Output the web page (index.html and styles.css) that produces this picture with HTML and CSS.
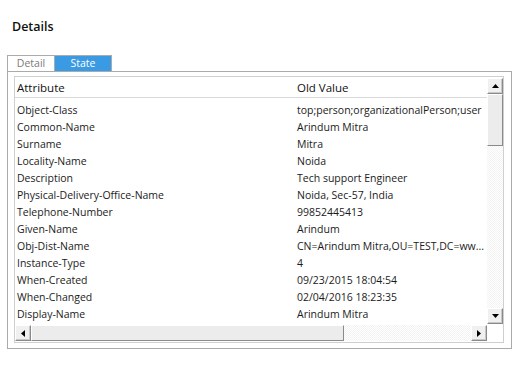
FILE: index.html
```html
<!DOCTYPE html>
<html>
<head>
<meta charset="utf-8">
<link rel="stylesheet" href="styles.css">
</head>
<body>
<h1 class="title">Details</h1>
<div class="panel">
  <div class="tabs">
    <div class="tab tab-off">Detail</div>
    <div class="tab tab-on">State</div>
  </div>
  <div class="box">
    <div class="list">
      <div class="content">
        <div class="head">
          <div class="c1">Attribute</div>
          <div class="c2">Old Value</div>
        </div>
        <div class="rows">
          <div class="row"><div class="c1">Object-Class</div><div class="c2">top;person;organizationalPerson;user</div></div>
          <div class="row"><div class="c1">Common-Name</div><div class="c2">Arindum Mitra</div></div>
          <div class="row"><div class="c1">Surname</div><div class="c2">Mitra</div></div>
          <div class="row"><div class="c1">Locality-Name</div><div class="c2">Noida</div></div>
          <div class="row"><div class="c1">Description</div><div class="c2">Tech support Engineer</div></div>
          <div class="row"><div class="c1">Physical-Delivery-Office-Name</div><div class="c2">Noida, Sec-57, India</div></div>
          <div class="row"><div class="c1">Telephone-Number</div><div class="c2">99852445413</div></div>
          <div class="row"><div class="c1">Given-Name</div><div class="c2">Arindum</div></div>
          <div class="row"><div class="c1">Obj-Dist-Name</div><div class="c2">CN=Arindum Mitra,OU=TEST,DC=ww...</div></div>
          <div class="row"><div class="c1">Instance-Type</div><div class="c2">4</div></div>
          <div class="row"><div class="c1">When-Created</div><div class="c2">09/23/2015 18:04:54</div></div>
          <div class="row"><div class="c1">When-Changed</div><div class="c2">02/04/2016 18:23:35</div></div>
          <div class="row"><div class="c1">Display-Name</div><div class="c2">Arindum Mitra</div></div>
        </div>
      </div>
      <div class="vbar">
        <div class="btn"><svg width="7" height="4" viewBox="0 0 7 4"><path d="M3.5 0L7 4H0Z" fill="#000"/></svg></div>
        <div class="track vtrack"><div class="vthumb"></div></div>
        <div class="btn"><svg width="7" height="4" viewBox="0 0 7 4"><path d="M0 0H7L3.5 4Z" fill="#000"/></svg></div>
      </div>
      <div class="hbar">
        <div class="btn"><svg width="4" height="7" viewBox="0 0 4 7"><path d="M4 0V7L0 3.5Z" fill="#000"/></svg></div>
        <div class="track htrack"><div class="hthumb"></div></div>
        <div class="btn"><svg width="4" height="7" viewBox="0 0 4 7"><path d="M0 0L4 3.5L0 7Z" fill="#000"/></svg></div>
      </div>
      <div class="corner"></div>
    </div>
  </div>
</div>
</body>
</html>
```

FILE: styles.css
```css
html, body {
  margin: 0;
  padding: 0;
  background: #fff;
}
body {
  font-family: "Open Sans", "Noto Sans", sans-serif;
  color: #1b1b1b;
}
.title {
  margin: 0;
  padding: 18px 0 0 12px;
  height: 21px;
  font-size: 12.5px;
  font-weight: 600;
  line-height: 18px;
  color: #111;
}
.panel {
  margin: 16px 0 0 7px;
  width: 505px;
}
.tabs {
  display: flex;
  height: 16px;
}
.tab {
  box-sizing: border-box;
  height: 16px;
  font-size: 10.5px;
  line-height: 15px;
  text-align: center;
}
.tab-off {
  width: 48px;
  border: 1px solid #aaa;
  border-bottom: none;
  color: #7a7a7a;
  background: #fff;
}
.tab-on {
  width: 57px;
  background: #3a9ae3;
  color: #fff;
  border-top: 1px solid #aaa;
  border-right: 1px solid #aaa;
}
.box {
  box-sizing: border-box;
  width: 505px;
  height: 278px;
  border: 1px solid #aaa;
  padding: 4px 0 0 6px;
}
.list {
  box-sizing: border-box;
  width: 490px;
  height: 267px;
  border: 1px solid #cfcfcf;
  display: grid;
  grid-template-columns: 472px 16px;
  grid-template-rows: 247px 18px;
  overflow: hidden;
}
.content {
  overflow: hidden;
}
.head {
  display: flex;
  height: 20px;
  border-bottom: 1px solid #dadada;
  font-size: 11.5px;
  line-height: 22px;
  color: #111;
}
.c1 {
  width: 280px;
  padding-left: 2px;
  flex: none;
  white-space: nowrap;
}
.c2 {
  white-space: nowrap;
}
.rows {
  padding-top: 4px;
}
.row {
  display: flex;
  height: 17px;
  font-size: 10.5px;
  line-height: 17px;
}
.vbar {
  display: flex;
  flex-direction: column;
  padding-top: 1px;
}
.btn {
  box-sizing: border-box;
  width: 16px;
  height: 16px;
  flex: none;
  background: #f0f0f0;
  border-top: 1px solid #fff;
  border-left: 1px solid #fff;
  border-right: 1px solid #8a8a8a;
  border-bottom: 1px solid #8a8a8a;
  box-shadow: inset -1px -1px 0 #c8c8c8;
  display: flex;
  align-items: center;
  justify-content: center;
}
.track {
  flex: 1;
  background-color: #fff;
  background-image: repeating-conic-gradient(#f3f3f3 0 25%, #fff 0 50%);
  background-size: 2px 2px;
}
.vthumb {
  box-sizing: border-box;
  width: 16px;
  height: 52px;
  background: #ececec;
  border-top: 1px solid #fff;
  border-left: 1px solid #fff;
  border-right: 1px solid #8a8a8a;
  border-bottom: 1px solid #8a8a8a;
}
.hbar {
  display: flex;
  align-items: flex-start;
  padding-top: 1px;
}
.htrack {
  height: 16px;
}
.hthumb {
  box-sizing: border-box;
  width: 313px;
  height: 16px;
  background: #ececec;
  border-top: 1px solid #fff;
  border-left: 1px solid #fff;
  border-right: 1px solid #8a8a8a;
  border-bottom: 1px solid #8a8a8a;
}
.corner {
  background: #fff;
}
```
